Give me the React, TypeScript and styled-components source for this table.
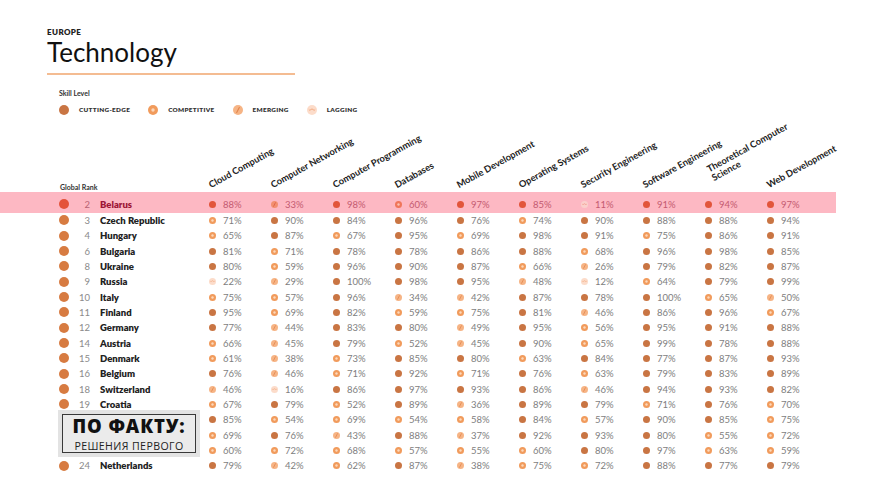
import React from "react";
import styled, { createGlobalStyle, css } from "styled-components";

type Level = "cutting" | "competitive" | "emerging" | "lagging";

const levelOf = (v: number): Level =>
  v >= 76 ? "cutting" : v >= 51 ? "competitive" : v >= 26 ? "emerging" : "lagging";

const TONES = {
  normal: {
    cutting: { fill: "#c97543", mark: "#c97543" },
    competitive: { fill: "#f19b5c", mark: "#fcd8bb" },
    emerging: { fill: "#f6b485", mark: "#e3854c" },
    lagging: { fill: "#fcdcca", mark: "#f1a57b" },
  },
  hot: {
    cutting: { fill: "#e2553b", mark: "#e2553b" },
    competitive: { fill: "#f0765a", mark: "#fcc3b4" },
    emerging: { fill: "#f2906f", mark: "#dd5b41" },
    lagging: { fill: "#fbd0cc", mark: "#ee8a78" },
  },
};

const SKILLS: { label: React.ReactNode; shift?: number; lift?: number }[] = [
  { label: "Cloud Computing" },
  { label: "Computer Networking" },
  { label: "Computer Programming" },
  { label: "Databases" },
  { label: "Mobile Development" },
  { label: "Operating Systems" },
  { label: "Security Engineering" },
  { label: "Software Engineering" },
  {
    label: (
      <>
        Theoretical Computer
        <br />
        Science
      </>
    ),
    shift: 7,
    lift: 7,
  },
  { label: "Web Development" },
];

const belarus = { rank: 2, name: "Belarus", v: [88, 33, 98, 60, 97, 85, 11, 91, 94, 97] };

// rows 20-22 sit under the stamp, so their rank and name are not shown
const rows = [
  { rank: 3, name: "Czech Republic", v: [71, 90, 84, 96, 76, 74, 90, 88, 88, 94] },
  { rank: 4, name: "Hungary", v: [65, 87, 67, 95, 69, 98, 91, 75, 86, 91] },
  { rank: 6, name: "Bulgaria", v: [81, 71, 78, 78, 86, 88, 68, 96, 98, 85] },
  { rank: 8, name: "Ukraine", v: [80, 59, 96, 90, 87, 66, 26, 79, 82, 87] },
  { rank: 9, name: "Russia", v: [22, 29, 100, 98, 95, 48, 12, 64, 79, 99] },
  { rank: 10, name: "Italy", v: [75, 57, 96, 34, 42, 87, 78, 100, 65, 50] },
  { rank: 11, name: "Finland", v: [95, 69, 82, 59, 75, 81, 46, 86, 96, 67] },
  { rank: 12, name: "Germany", v: [77, 44, 83, 80, 49, 95, 56, 95, 91, 88] },
  { rank: 14, name: "Austria", v: [66, 45, 79, 52, 45, 90, 65, 99, 78, 88] },
  { rank: 15, name: "Denmark", v: [61, 38, 73, 85, 80, 63, 84, 77, 87, 93] },
  { rank: 16, name: "Belgium", v: [76, 46, 71, 92, 71, 76, 63, 79, 83, 89] },
  { rank: 18, name: "Switzerland", v: [46, 16, 86, 97, 93, 86, 46, 94, 93, 82] },
  { rank: 19, name: "Croatia", v: [67, 79, 52, 89, 36, 89, 79, 71, 76, 70] },
  { rank: 20, name: "", covered: true, v: [85, 54, 69, 54, 58, 84, 57, 90, 85, 75] },
  { rank: 21, name: "", covered: true, v: [69, 76, 43, 88, 37, 92, 93, 80, 55, 72] },
  { rank: 22, name: "", covered: true, v: [60, 72, 68, 57, 55, 60, 80, 97, 63, 59] },
  { rank: 24, name: "Netherlands", v: [79, 42, 62, 87, 38, 75, 72, 88, 77, 79] },
];

const GlobalStyle = createGlobalStyle`
  body {
    margin: 0;
    background: #fff;
    font-family: Lato, "Liberation Sans", sans-serif;
    color: #222;
  }
`;

const Page = styled.div`
  position: relative;
  width: 870px;
  height: 486px;
  overflow: hidden;
`;

const Intro = styled.header`
  padding: 27px 0 0 47px;
`;

const Region = styled.div`
  font-size: 8px;
  line-height: 10px;
  font-weight: 800;
  letter-spacing: 0.4px;
  color: #222;
`;

const Title = styled.h1`
  margin: 0;
  font-size: 26px;
  line-height: 31px;
  font-weight: 400;
  color: #111;
`;

const Rule = styled.div`
  margin-top: 5px;
  width: 248px;
  height: 2px;
  background: #f4bc92;
`;

const LegendBlock = styled.section`
  padding: 13px 0 0 59px;
`;

const LegendTitle = styled.div`
  font-size: 7px;
  line-height: 10px;
  font-weight: 700;
  color: #333;
`;

const LegendRow = styled.div`
  display: flex;
  gap: 18px;
  margin-top: 6.5px;
  height: 10px;
  align-items: center;
`;

const LegendItem = styled.div`
  display: flex;
  align-items: center;
  gap: 10px;
  font-size: 6.4px;
  font-weight: 800;
  letter-spacing: 0.3px;
  color: #333;
`;

const DotSvg = styled.svg<{ $size: number }>`
  display: block;
  flex: none;
  width: ${(p) => p.$size}px;
  height: ${(p) => p.$size}px;
`;

const Dot = ({ level, size, hot }: { level: Level; size: number; hot?: boolean }) => {
  const c = (hot ? TONES.hot : TONES.normal)[level];
  return (
    <DotSvg viewBox="0 0 10 10" $size={size}>
      <circle cx="5" cy="5" r="5" fill={c.fill} />
      {level === "competitive" && <circle cx="5" cy="5" r="1.7" fill={c.mark} />}
      {level === "emerging" && (
        <line x1="3.7" y1="7.6" x2="6.3" y2="2.4" stroke={c.mark} strokeWidth="1.1" strokeLinecap="round" />
      )}
      {level === "lagging" && (
        <path d="M1.8 4.4 Q2.8 6.2 3.9 4.6 Q5 3.2 6.1 4.6 Q7.2 6.2 8.2 4.4" fill="none" stroke={c.mark} strokeWidth="0.9" />
      )}
    </DotSvg>
  );
};

const grid = css`
  display: grid;
  grid-template-columns: 207px repeat(10, 62px);
  padding-right: 9px;
  width: max-content;
`;

const HeadRow = styled.div`
  ${grid}
  height: 77px;
  align-items: end;
`;

const RankHead = styled.div`
  padding-left: 60px;
  font-size: 7px;
  line-height: 10px;
  font-weight: 700;
  color: #333;
`;

const SkillHead = styled.div`
  height: 100%;
  display: flex;
  align-items: flex-end;
  padding: 0 0 2px 5px;
`;

const SkillLabel = styled.span<{ $shift?: number; $lift?: number }>`
  display: block;
  width: max-content;
  font-size: 9.3px;
  line-height: 10px;
  font-weight: 700;
  color: #222;
  white-space: nowrap;
  transform-origin: left bottom;
  transform: rotate(-29deg);
  margin-left: ${(p) => p.$shift ?? 0}px;
  margin-bottom: ${(p) => p.$lift ?? 0}px;
`;

const DataRow = styled.div<{ $hot?: boolean }>`
  ${grid}
  grid-auto-rows: 15.33px;
  align-items: center;
  ${(p) =>
    p.$hot &&
    css`
      background: #fdb8c3;
      padding-top: 5px;
      padding-bottom: 1px;
    `}
`;

const CountryCell = styled.div`
  display: flex;
  align-items: center;
  padding-left: 59px;
`;

const BigDot = styled.span<{ $hot?: boolean }>`
  width: 10px;
  height: 10px;
  border-radius: 50%;
  flex: none;
  background: ${(p) => (p.$hot ? "#e4523a" : "#d77b41")};
`;

const Rank = styled.span<{ $hot?: boolean }>`
  width: 21px;
  text-align: right;
  font-size: 9.5px;
  color: ${(p) => (p.$hot ? "#b86373" : "#8a8a8a")};
`;

const Name = styled.span<{ $hot?: boolean }>`
  margin-left: 10px;
  font-size: 9.5px;
  font-weight: 800;
  color: ${(p) => (p.$hot ? "#9e1636" : "#222")};
`;

const ValueCell = styled.div`
  display: flex;
  align-items: center;
  gap: 7px;
  padding-left: 2px;
`;

const Value = styled.span<{ $hot?: boolean }>`
  font-size: 9.5px;
  color: ${(p) => (p.$hot ? "#c45a70" : "#7e7e7e")};
`;

const Stamp = styled.div`
  position: absolute;
  left: 58px;
  top: 410px;
  width: 142px;
  height: 47px;
  box-sizing: border-box;
  padding: 4px;
  background: #e3e3e3;
`;

const StampFrame = styled.div`
  height: 100%;
  box-sizing: border-box;
  border: 1.5px solid #393939;
  background: #ebebeb;
  display: flex;
  flex-direction: column;
  align-items: center;
  justify-content: center;
  font-family: "Open Sans", "Liberation Sans", sans-serif;
`;

const StampBig = styled.div`
  font-size: 18.5px;
  line-height: 22px;
  font-weight: 800;
  letter-spacing: 0.9px;
  color: #111;
`;

const StampSmall = styled.div`
  margin-top: 3px;
  font-size: 10.6px;
  line-height: 12px;
  letter-spacing: 0.4px;
  color: #222;
`;

type RowData = { rank: number; name: string; covered?: boolean; v: number[] };

const CountryRow = ({ row, hot }: { row: RowData; hot?: boolean }) => (
  <DataRow $hot={hot}>
    <CountryCell>
      {!row.covered && (
        <>
          <BigDot $hot={hot} />
          <Rank $hot={hot}>{row.rank}</Rank>
          <Name $hot={hot}>{row.name}</Name>
        </>
      )}
    </CountryCell>
    {row.v.map((v, i) => (
      <ValueCell key={i}>
        <Dot level={levelOf(v)} size={7} hot={hot} />
        <Value $hot={hot}>{v}%</Value>
      </ValueCell>
    ))}
  </DataRow>
);

export default function App() {
  return (
    <Page>
      <GlobalStyle />
      <Intro>
        <Region>EUROPE</Region>
        <Title>Technology</Title>
        <Rule />
      </Intro>

      <LegendBlock>
        <LegendTitle>Skill Level</LegendTitle>
        <LegendRow>
          <LegendItem>
            <Dot level="cutting" size={10} />
            CUTTING-EDGE
          </LegendItem>
          <LegendItem>
            <Dot level="competitive" size={10} />
            COMPETITIVE
          </LegendItem>
          <LegendItem>
            <Dot level="emerging" size={10} />
            EMERGING
          </LegendItem>
          <LegendItem>
            <Dot level="lagging" size={10} />
            LAGGING
          </LegendItem>
        </LegendRow>
      </LegendBlock>

      <HeadRow>
        <RankHead>Global Rank</RankHead>
        {SKILLS.map((s, i) => (
          <SkillHead key={i}>
            <SkillLabel $shift={s.shift} $lift={s.lift}>
              {s.label}
            </SkillLabel>
          </SkillHead>
        ))}
      </HeadRow>

      <CountryRow row={belarus} hot />
      {rows.map((r) => (
        <CountryRow key={r.rank} row={r} />
      ))}

      <Stamp>
        <StampFrame>
          <StampBig>ПО ФАКТУ:</StampBig>
          <StampSmall>РЕШЕНИЯ ПЕРВОГО</StampSmall>
        </StampFrame>
      </Stamp>
    </Page>
  );
}
